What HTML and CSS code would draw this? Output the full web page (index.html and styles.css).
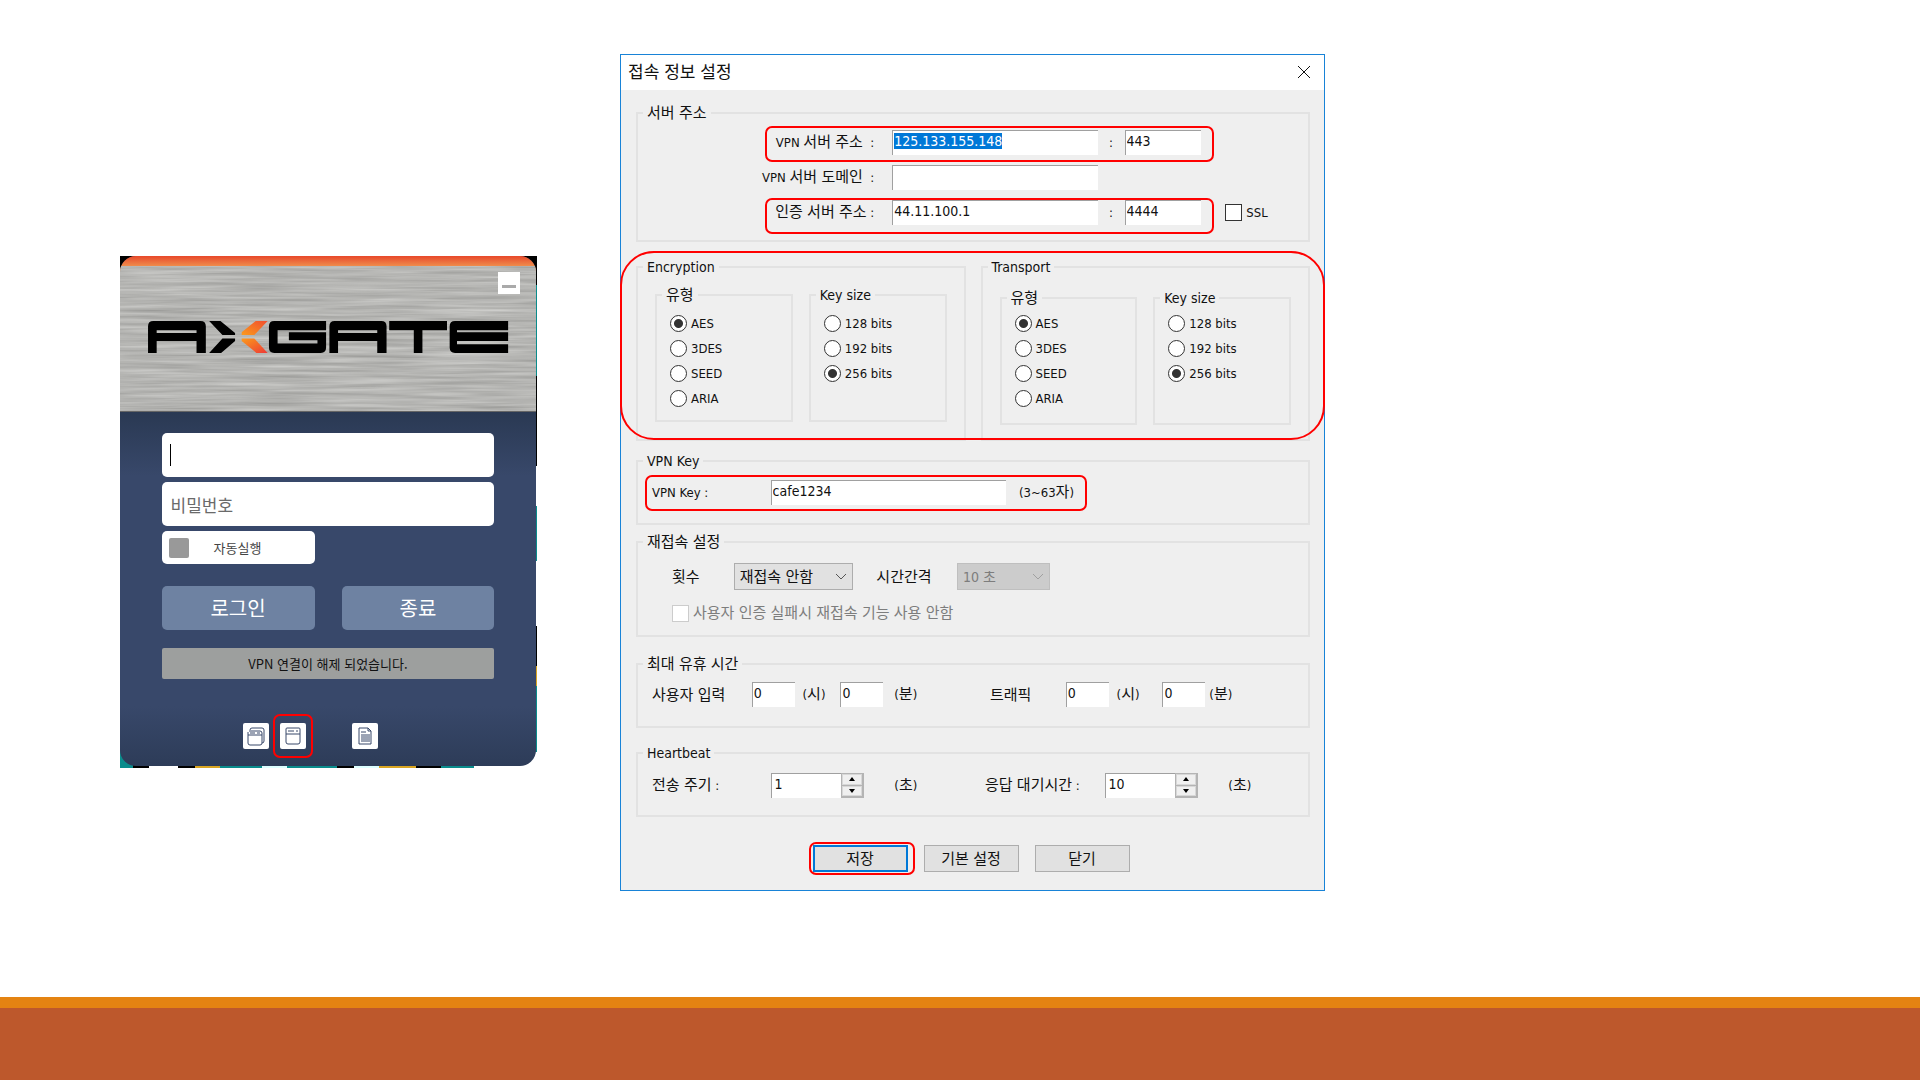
FILE: index.html
```html
<!DOCTYPE html>
<html lang="ko">
<head>
<meta charset="utf-8">
<title>AXGATE VPN 접속 정보 설정</title>
<link rel="stylesheet" href="styles.css">
</head>
<body>
<main class="stage">
  <section class="client">
    <div class="client-window">
      <header class="brand">
        <svg class="metal" aria-hidden="true">
          <filter id="brushed" x="0" y="0" width="100%" height="100%" color-interpolation-filters="sRGB">
            <feTurbulence type="fractalNoise" baseFrequency="0.01 0.3" numOctaves="3" seed="7"/>
            <feColorMatrix values="0.24 0 0 0 0.59  0.24 0 0 0 0.59  0.24 0 0 0 0.58  0 0 0 0 1"/>
          </filter>
          <rect width="100%" height="100%" filter="url(#brushed)"/>
        </svg>
        <button class="minimize" type="button" aria-label="최소화"></button>
        <svg class="logo" viewBox="114 228 1086 96" role="img" aria-label="AXGATE">
          <defs>
            <linearGradient id="flameTop" x1="0" y1="1" x2="1" y2="0"><stop offset="0" stop-color="#fb9a1c"/><stop offset="1" stop-color="#f04e30"/></linearGradient>
            <linearGradient id="flameBottom" x1="0" y1="0" x2="1" y2="1"><stop offset="0" stop-color="#fb9a1c"/><stop offset="1" stop-color="#ee3a36"/></linearGradient>
          </defs>
          <path fill-rule="evenodd" d="M114 324V244Q114 228 130 228H272Q288 228 288 244V324H260V288H140V324ZM140 256V264H260V256Z"/>
          <path d="M298 228H332L376 264V270H338ZM298 324H334L376 288V281H338Z"/>
          <path fill="url(#flameTop)" d="M474 228H438L396 262V270H434Z"/>
          <path fill="url(#flameBottom)" d="M474 324H440L396 288V281H434Z"/>
          <path d="M650 228H494Q478 228 478 244V308Q478 324 494 324H634Q650 324 650 308V262H538V286H624V296H504V256H650Z"/>
          <path fill-rule="evenodd" d="M660 324V244Q660 228 676 228H816Q832 228 832 244V324H804V288H686V324ZM686 256V264H804V256Z"/>
          <path d="M840 228H1014V256H940V324H914V256H840Z"/>
          <path d="M1198 228H1038Q1022 228 1022 244V308Q1022 324 1038 324H1198V298H1044V288H1198V262H1044V256H1198Z"/>
        </svg>
      </header>
      <form class="login">
        <input class="login-input caret" type="text" aria-label="아이디">
        <input class="login-input" type="password" placeholder="비밀번호" aria-label="비밀번호">
        <label class="autorun"><input type="checkbox"><span>자동실행</span></label>
        <div class="login-actions">
          <button type="button">로그인</button>
          <button type="button">종료</button>
        </div>
        <p class="status">VPN 연결이 해제 되었습니다.</p>
        <div class="tools">
          <button type="button" aria-label="프로필">
            <svg viewBox="0 0 26 26"><path d="M7 7Q7 5 9 5H19Q21 5 21 7V18Q21 20 19 20"/><path d="M6 8H17Q19 8 19 10V20Q19 22 17 22H7Q5 22 5 20V9M5 12H19M7 10H12M14 10H17"/></svg>
          </button>
          <button class="marked" type="button" aria-label="접속 정보 설정">
            <svg viewBox="0 0 26 26"><path d="M7 5H19Q20 5 20 6V19Q20 21 18 21H8Q6 21 6 19V6Q6 5 7 5ZM6 11H20M8 8H14M16 8H18"/></svg>
            <span class="mark mark-tool"></span>
          </button>
          <button class="log" type="button" aria-label="로그">
            <svg viewBox="0 0 26 26"><path d="M7 5H16L19 8V21H7ZM16 5V8H19M9 9H14M9 12H18M9 14H18M9 16H18M9 18H18"/></svg>
          </button>
        </div>
      </form>
    </div>
  </section>

  <section class="dialog" aria-labelledby="dialog-title">
    <header class="titlebar">
      <h1 id="dialog-title">접속 정보 설정</h1>
      <button type="button" aria-label="닫기"><svg viewBox="0 0 14 14"><path d="M1 1L13 13M13 1L1 13"/></svg></button>
    </header>
    <form class="settings">
      <fieldset class="group server">
        <legend class="ko">서버 주소</legend>
        <div class="row server-row">
          <label for="vpn-ip">VPN <span class="ko">서버 주소</span> &nbsp;:</label>
          <input class="field" id="vpn-ip" type="text" value="125.133.155.148">
          <span class="colon">:</span>
          <input class="field" type="text" value="443" aria-label="VPN 서버 포트">
          <span class="mark mark-server"></span>
        </div>
        <div class="row server-row">
          <label for="vpn-domain">VPN <span class="ko">서버 도메인</span> &nbsp;:</label>
          <input class="field" id="vpn-domain" type="text">
        </div>
        <div class="row server-row">
          <label for="auth-ip"><span class="ko">인증 서버 주소</span> :</label>
          <input class="field" id="auth-ip" type="text" value="44.11.100.1">
          <span class="colon">:</span>
          <input class="field" type="text" value="4444" aria-label="인증 서버 포트">
          <label class="option ssl"><input type="checkbox">SSL</label>
          <span class="mark mark-server mark-auth"></span>
        </div>
      </fieldset>

      <div class="ciphers">
        <fieldset class="group cipher">
          <legend>Encryption</legend>
          <div class="cipher-columns">
            <fieldset class="group choices">
              <legend class="ko">유형</legend>
              <label class="option"><input type="radio" name="enc-type" checked>AES</label>
              <label class="option"><input type="radio" name="enc-type">3DES</label>
              <label class="option"><input type="radio" name="enc-type">SEED</label>
              <label class="option"><input type="radio" name="enc-type">ARIA</label>
            </fieldset>
            <fieldset class="group choices">
              <legend>Key size</legend>
              <label class="option"><input type="radio" name="enc-size">128 bits</label>
              <label class="option"><input type="radio" name="enc-size">192 bits</label>
              <label class="option"><input type="radio" name="enc-size" checked>256 bits</label>
            </fieldset>
          </div>
        </fieldset>
        <fieldset class="group cipher transport">
          <legend>Transport</legend>
          <div class="cipher-columns">
            <fieldset class="group choices">
              <legend class="ko">유형</legend>
              <label class="option"><input type="radio" name="tr-type" checked>AES</label>
              <label class="option"><input type="radio" name="tr-type">3DES</label>
              <label class="option"><input type="radio" name="tr-type">SEED</label>
              <label class="option"><input type="radio" name="tr-type">ARIA</label>
            </fieldset>
            <fieldset class="group choices">
              <legend>Key size</legend>
              <label class="option"><input type="radio" name="tr-size">128 bits</label>
              <label class="option"><input type="radio" name="tr-size">192 bits</label>
              <label class="option"><input type="radio" name="tr-size" checked>256 bits</label>
            </fieldset>
          </div>
        </fieldset>
        <span class="mark mark-ciphers"></span>
      </div>

      <fieldset class="group vpn-key">
        <legend>VPN Key</legend>
        <div class="row key-row">
          <label for="vpn-key">VPN Key :</label>
          <input class="field" id="vpn-key" type="text" value="cafe1234">
          <span class="hint">(3~63<span class="ko">자</span>)</span>
          <span class="mark mark-key"></span>
        </div>
      </fieldset>

      <fieldset class="group reconnect">
        <legend class="ko">재접속 설정</legend>
        <div class="row reconnect-row">
          <label class="ko" for="retry">횟수</label>
          <select id="retry"><option>재접속 안함</option></select>
          <label class="ko interval" for="interval">시간간격</label>
          <select id="interval" disabled><option>10 초</option></select>
        </div>
        <label class="option ko no-retry"><input type="checkbox" disabled>사용자 인증 실패시 재접속 기능 사용 안함</label>
      </fieldset>

      <fieldset class="group idle">
        <legend class="ko">최대 유휴 시간</legend>
        <div class="row idle-row">
          <label class="ko" for="idle-h">사용자 입력</label>
          <input class="field" id="idle-h" type="text" value="0">
          <label class="unit" for="idle-h">(<span class="ko">시</span>)</label>
          <input class="field" id="idle-m" type="text" value="0">
          <label class="unit wide" for="idle-m">(<span class="ko">분</span>)</label>
          <label class="ko traffic" for="traffic-h">트래픽</label>
          <input class="field" id="traffic-h" type="text" value="0">
          <label class="unit" for="traffic-h">(<span class="ko">시</span>)</label>
          <input class="field" id="traffic-m" type="text" value="0">
          <label class="unit last" for="traffic-m">(<span class="ko">분</span>)</label>
        </div>
      </fieldset>

      <fieldset class="group heartbeat">
        <legend>Heartbeat</legend>
        <div class="row heartbeat-row">
          <label for="period"><span class="ko">전송 주기</span> :</label>
          <div class="spinner">
            <input class="field" id="period" type="number" value="1">
            <span class="steps"><button type="button" aria-label="증가"></button><button type="button" aria-label="감소"></button></span>
          </div>
          <span class="seconds">(<span class="ko">초</span>)</span>
          <label class="wait" for="wait"><span class="ko">응답 대기시간</span> :</label>
          <div class="spinner">
            <input class="field" id="wait" type="number" value="10">
            <span class="steps"><button type="button" aria-label="증가"></button><button type="button" aria-label="감소"></button></span>
          </div>
          <span class="seconds">(<span class="ko">초</span>)</span>
        </div>
      </fieldset>

      <div class="actions">
        <button class="primary" type="button">저장<span class="mark mark-save"></span></button>
        <button type="button">기본 설정</button>
        <button type="button">닫기</button>
      </div>
    </form>
  </section>
</main>
<footer class="slide-footer"></footer>
<script src="app.js"></script>
</body>
</html>
```
FILE: styles.css
```css
* {
  box-sizing: border-box;
}

body {
  margin: 0;
  min-height: 100vh;
  display: flex;
  flex-direction: column;
  background: #fff;
  color: #111;
  font-family: "DejaVu Sans Condensed", "Noto Sans CJK KR", sans-serif;
  font-size: 13px;
  line-height: 20px;
}

button,
input,
select {
  font: inherit;
  color: inherit;
  margin: 0;
  padding: 0;
  border: 0;
  border-radius: 0;
  min-width: 0;
  outline: 0;
}

.stage {
  flex: 1;
  display: grid;
  grid-template-columns: 120fr 417fr 83fr 705fr 595fr;
  align-items: start;
  padding: 54px 0;
}

.slide-footer {
  height: 83px;
  background: #bd582c;
  border-top: 11px solid #e48312;
}

/* Red call-outs drawn over the controls */
.mark {
  position: absolute;
  border: 2px solid #f00;
  border-radius: 7px;
  pointer-events: none;
}

/* VPN client */
.client {
  grid-column: 2;
  margin-top: 202px;
  padding: 0 1px 2px 0;
  background:
    linear-gradient(90deg, #0a8c8c 3%, #000 3% 7%, #fff 7% 14%, #000 14% 18%, #d9a520 18% 24%, #0a8c8c 24% 34%, #dff 34% 40%, #0a8c8c 40% 52%, #000 52% 56%, #dff 56% 62%, #d9a520 62% 71%, #000 71% 77%, #0a8c8c 77% 85%, #fff 85%) bottom / 100% 16px no-repeat,
    linear-gradient(#000 29px, #0a8c8c 29px 120px, #000 120px 210px, #fff 210px 250px, #0a8c8c 250px 305px, #fff 305px 370px, #000 370px 410px, #d9a520 410px 430px, #0a8c8c 430px);
}

.client-window {
  border-radius: 16px;
  overflow: hidden;
  background: linear-gradient(#2a3953 156px, #38486a 220px, #38486a 450px, #2d3c58);
}

.brand {
  position: relative;
  height: 156px;
  background: linear-gradient(#e8482a, #ef8c4c 10px);
  border-bottom: 1px solid #666;
  padding: 16px 16px 0 28px;
  display: flex;
  flex-direction: column;
}

.metal {
  position: absolute;
  inset: 10px 0 0;
  width: 100%;
  height: calc(100% - 10px);
}

.minimize {
  position: relative;
  align-self: flex-end;
  width: 22px;
  height: 22px;
  background: linear-gradient(#aaa, #aaa) 4px 13px / 14px 3px no-repeat #fff;
}

.logo {
  position: relative;
  width: 97%;
  margin-top: 27px;
}

.login {
  display: flex;
  flex-direction: column;
  gap: 5px;
  padding: 21px 10% 17px;
  font-family: "Noto Sans CJK KR", sans-serif;
}

.login-input {
  height: 44px;
  padding: 0 9px;
  border-radius: 5px;
  background: #fff;
  font-size: 17px;
}

.login-input::placeholder {
  color: #6a6a6a;
  opacity: 1;
}

.login-input.caret {
  background: linear-gradient(#000, #000) 8px 11px / 1px 22px no-repeat #fff;
}

.autorun {
  display: flex;
  align-items: center;
  gap: 25px;
  width: 46%;
  height: 33px;
  padding-left: 7px;
  border-radius: 5px;
  background: #fff;
  color: #444;
}

.autorun input {
  appearance: none;
  width: 20px;
  height: 20px;
  border-radius: 2px;
  background: #999;
}

.login-actions {
  display: grid;
  grid-template-columns: 1fr 1fr;
  gap: 27px;
  margin-top: 17px;
}

.login-actions button {
  height: 44px;
  border-radius: 5px;
  background: #6e82a2;
  color: #fff;
  font-size: 20px;
}

.status {
  margin: 13px 0 0;
  border-radius: 2px;
  background: #9d9f9e;
  line-height: 31px;
  text-align: center;
}

.tools {
  display: flex;
  gap: 11px;
  justify-content: center;
  margin-top: 39px;
  padding-right: 36px;
}

.tools button {
  width: 26px;
  height: 26px;
  border-radius: 2px;
  background: #fff;
}

.tools svg {
  display: block;
  fill: none;
  stroke: #38486a;
}

.tools .marked {
  position: relative;
}

.tools .log {
  margin-left: 35px;
}

.mark-tool {
  inset: -9px -7px;
}

/* Settings dialog */
.dialog {
  grid-column: 4;
  border: 1px solid #1883d7;
  background: #efefef;
}

.titlebar {
  display: flex;
  align-items: center;
  justify-content: space-between;
  height: 35px;
  padding: 0 13px 2px 7px;
  background: #fff;
}

.titlebar h1 {
  margin: 0;
  font-size: 17px;
  font-weight: 400;
}

.titlebar button {
  width: 14px;
  height: 14px;
  background: none;
}

.titlebar svg {
  display: block;
  fill: none;
  stroke: #111;
}

.settings {
  padding: 13px 14px 18px 15px;
}

.group {
  margin: 0;
  min-width: 0;
  padding: 0;
  border: 2px solid #e2e2e2;
}

.group legend {
  margin-left: 5px;
  padding: 0 4px;
  font-size: 14px;
}

.ko,
.group legend.ko {
  font-size: 15px;
}

.row {
  position: relative;
  display: grid;
  align-items: center;
}

.field {
  width: 100%;
  height: 25px;
  padding: 0 0 4px 1px;
  border-top: 1px solid #a0a0a0;
  border-left: 1px solid #a0a0a0;
  background: #fff;
  font-size: 14px;
}

.field::selection {
  background: #0078d7;
  color: #fff;
}

.option {
  display: flex;
  align-items: center;
  gap: 4px;
}

.option input {
  flex: none;
  appearance: none;
  width: 17px;
  height: 17px;
  border: 1px solid #333;
  background: #fff;
}

.option input[type="radio"] {
  border-radius: 50%;
}

.option input[type="radio"]:checked {
  background: radial-gradient(circle, #333 4px, #fff 5px);
}

.server {
  padding: 7px 0 15px;
}

.server-row {
  grid-template-columns: 255fr 206fr 27fr 77fr 107fr;
}

.server-row + .server-row {
  margin-top: 10px;
}

.server-row > label:first-child {
  padding-right: 18px;
  text-align: right;
}

.colon {
  text-align: center;
}

.ssl {
  padding-left: 24px;
}

.mark-server {
  inset: -4px 14% -7px 19%;
}

.mark-auth {
  top: -2px;
  bottom: -9px;
}

.ciphers {
  position: relative;
  display: grid;
  grid-template-columns: 1fr 1fr;
  gap: 15px;
  margin-top: 15px;
}

.cipher {
  padding: 8px 17px 17px;
}

.cipher > legend {
  margin-left: -12px;
}

.cipher-columns {
  display: grid;
  grid-template-columns: 1fr 1fr;
  gap: 16px;
}

.choices {
  padding: 6px 0 9px 13px;
}

.choices legend {
  margin-left: -8px;
}

.choices .option {
  height: 25px;
}

.transport {
  padding: 11px 17px 14px;
}

.transport .choices {
  padding-top: 3px;
  padding-bottom: 12px;
}

.mark-ciphers {
  inset: -6px -15px 1px -16px;
  border-radius: 34px;
}

.vpn-key {
  margin-top: 10px;
  padding: 9px 0 18px;
}

.key-row {
  grid-template-columns: 133fr 236fr 303fr;
}

.key-row > label,
.idle-row > label:first-child,
.heartbeat-row > label:first-child {
  padding-left: 14px;
}

.hint {
  padding-left: 13px;
}

.mark-key {
  inset: -5px 33% -6px 1%;
}

.reconnect {
  margin-top: 7px;
  padding: 11px 0 12px;
}

.reconnect-row {
  grid-template-columns: 96fr 120fr 104fr 93fr 259fr;
}

.reconnect-row > label:first-child {
  padding-left: 34px;
}

.reconnect-row .interval {
  padding-left: 23px;
}

.reconnect-row select {
  appearance: none;
  width: 100%;
  height: 27px;
  padding-left: 5px;
  border: 1px solid #adadad;
  background: url("data:image/svg+xml,%3Csvg xmlns='http://www.w3.org/2000/svg' width='12' height='7'%3E%3Cpath d='M1 1l5 5 5-5' fill='none' stroke='%23555'/%3E%3C/svg%3E") right 5px center no-repeat #e1e1e1;
  font-size: 15px;
}

.reconnect-row select:disabled {
  border-color: #bfbfbf;
  background: url("data:image/svg+xml,%3Csvg xmlns='http://www.w3.org/2000/svg' width='12' height='7'%3E%3Cpath d='M1 1l5 5 5-5' fill='none' stroke='%23a0a0a0'/%3E%3C/svg%3E") right 5px center no-repeat #ccc;
  color: #7d7d7d;
  opacity: 1;
  font-size: 14px;
}

.no-retry {
  margin: 13px 0 0 34px;
  color: #7d7d7d;
}

.no-retry input {
  border-color: #ccc;
}

.idle {
  margin-top: 17px;
  padding: 8px 0 19px;
}

.idle-row {
  grid-template-columns: 114fr 43fr 46fr 43fr 96fr 87fr 43fr 54fr 43fr 103fr;
}

.unit {
  padding-left: 8px;
}

.unit.wide,
.traffic {
  padding-left: 11px;
}

.unit.last {
  padding-left: 4px;
}

.heartbeat {
  margin-top: 15px;
  padding: 10px 0 17px;
}

.heartbeat-row {
  grid-template-columns: 133fr 94fr 116fr 125fr 94fr 110fr;
}

.seconds {
  padding-left: 30px;
}

.wait {
  padding-left: 5px;
}

.spinner {
  display: flex;
}

.spinner .field {
  appearance: textfield;
  flex: 1;
  padding-left: 3px;
}

.spinner .field::-webkit-inner-spin-button {
  display: none;
}

.steps {
  display: flex;
  flex-direction: column;
  gap: 1px;
  width: 23px;
  height: 25px;
  padding: 1px 2px 2px 1px;
  background: #b4b4b4;
}

.steps button {
  flex: 1;
  display: flex;
  align-items: center;
  justify-content: center;
  border: 1px solid #d8d8d8;
  background: #f0f0f0;
}

.steps button::before {
  content: "";
  border: 3px solid transparent;
  border-top-width: 0;
  border-bottom: 4px solid #000;
}

.steps button:last-child::before {
  border-top: 4px solid #000;
  border-bottom-width: 0;
}

.actions {
  display: flex;
  justify-content: center;
  gap: 16px;
  margin-top: 28px;
  padding-right: 4px;
}

.actions button {
  position: relative;
  width: 95px;
  height: 27px;
  border: 1px solid #adadad;
  background: #e1e1e1;
  font-size: 15px;
}

.actions .primary {
  border: 2px solid #0078d7;
}

.mark-save {
  inset: -5px -9px -5px -6px;
}
```
FILE: app.js
```js
// Open the dialog with the VPN server address ready to be overwritten.
document.getElementById("vpn-ip").select();
```
